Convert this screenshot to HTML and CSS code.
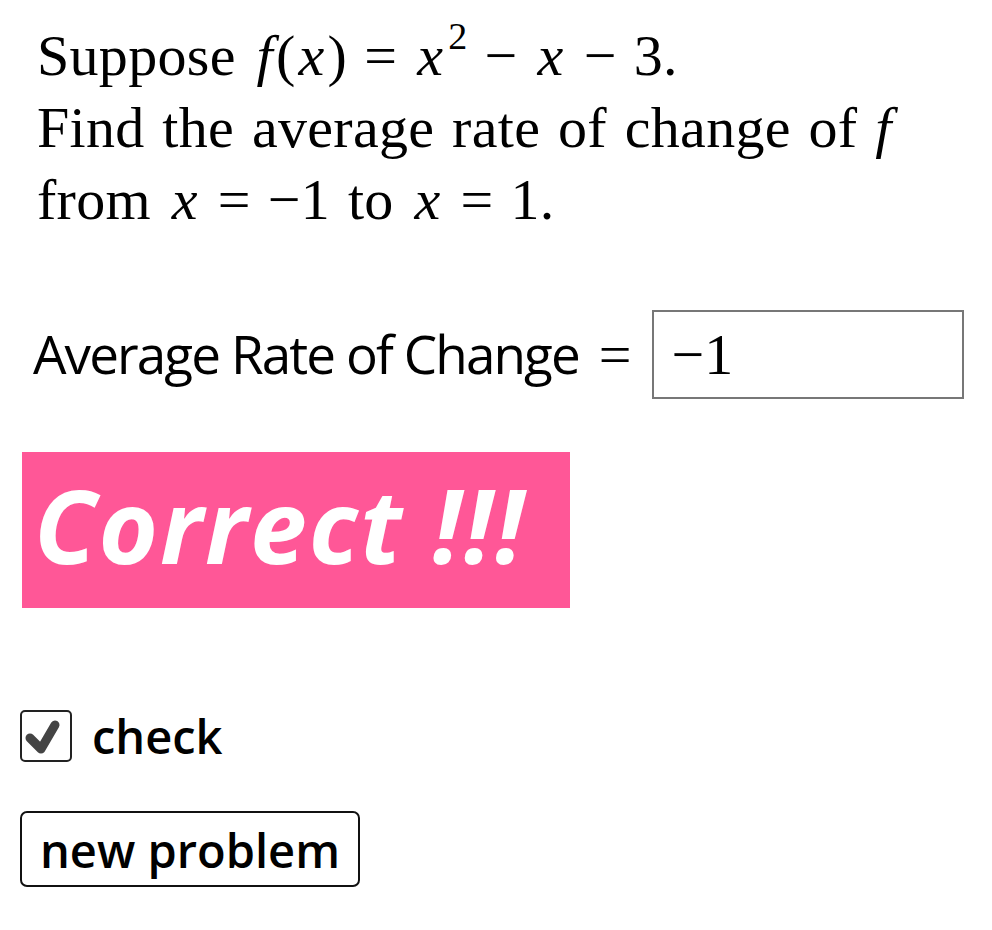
FILE: index.html
```html
<!DOCTYPE html>
<html lang="en">
  <head>
    <meta charset="UTF-8" />
    <meta name="viewport" content="width=device-width, initial-scale=1.0" />
    <title>Average Rate of Change</title>
    <link rel="stylesheet" href="styles.css">
  </head>
  <body>
    <div class="applet">
      <div class="question">
        <div class="line">Suppose <span class="math"><i>f</i>(<i>x</i>)<span class="op">=</span><i>x</i><sup>2</sup><span class="op">&minus;</span><i>x</i><span class="op">&minus;</span>3.</span></div>
        <div class="line">Find the average rate of change of <i>f</i></div>
        <div class="line">from <span class="math"><i>x</i><span class="op">=</span>&minus;1</span> to <span class="math"><i>x</i><span class="op">=</span>1.</span></div>
      </div>

      <div class="answer-row">
        <label for="answer" class="answer-label">Average Rate of Change</label>
        <span class="eq">=</span>
        <div class="answer-box" id="answer">&minus;1</div>
      </div>

      <div class="result">Correct !!!</div>

      <label class="check-row">
        <span class="checkbox">
          <svg viewBox="0 0 48 48" width="48" height="48">
            <path d="M8 26 L19 37 L33 13" fill="none" stroke="#444" stroke-width="9" stroke-linecap="round" stroke-linejoin="round" />
          </svg>
        </span>
        <span class="check-text">check</span>
      </label>

      <button type="button" class="btn">new problem</button>
    </div>
  </body>
</html>
```

FILE: styles.css
```css
body {
  margin: 0;
  padding: 0;
  background-color: #fff;
  color: #000;
}

.applet {
  display: flex;
  flex-direction: column;
  align-items: flex-start;
  padding: 20px 0 0 20px;
}

.question {
  padding-left: 17px;
  font-family: "Liberation Serif", "DejaVu Serif", serif;
  font-size: 58px;
  line-height: 72px;
  word-spacing: 3px;
  letter-spacing: 0.3px;
}

.question i {
  font-style: italic;
}

.math i {
  padding: 0 3px;
}

.op {
  margin: 0 17px;
}

.question sup {
  font-size: 38px;
  line-height: 0;
  vertical-align: 26px;
  margin-left: 2px;
}

.answer-row {
  display: flex;
  align-items: baseline;
  margin-top: 74px;
}

.answer-label {
  font-family: "Open Sans", "Noto Sans", sans-serif;
  font-size: 53px;
  letter-spacing: -1.9px;
  padding-left: 13px;
}

.eq {
  font-family: "Liberation Serif", serif;
  font-size: 58px;
  padding: 0 20px 0 20px;
}

.answer-box {
  width: 312px;
  height: 89px;
  box-sizing: border-box;
  border: 2px solid #777;
  padding: 0 0 0 18px;
  font-family: "Liberation Serif", "DejaVu Serif", serif;
  font-size: 58px;
  line-height: 86px;
}

.result {
  width: 548px;
  height: 156px;
  box-sizing: border-box;
  margin: 53px 0 0 2px;
  padding: 8px 0 0 12px;
  background-color: #ff5797;
  color: #fff;
  font-family: "Open Sans", "Noto Sans", sans-serif;
  font-weight: bold;
  font-style: italic;
  font-size: 102px;
  letter-spacing: 2px;
  line-height: 130px;
}

.check-row {
  display: flex;
  align-items: center;
  gap: 20px;
  margin-top: 96px;
  font-family: "Open Sans", "Noto Sans", sans-serif;
  font-size: 47px;
  font-weight: 600;
}

.checkbox {
  width: 52px;
  height: 52px;
  box-sizing: border-box;
  border: 2px solid #222;
  border-radius: 5px;
  display: flex;
  align-items: center;
  justify-content: center;
}

.checkbox svg {
  display: block;
}

.btn {
  margin-top: 43px;
  width: 340px;
  height: 76px;
  padding: 2px 0 0;
  border: 2px solid #111;
  border-radius: 7px;
  background-color: #fff;
  color: #000;
  font-family: "Open Sans", "Noto Sans", sans-serif;
  font-size: 47px;
  font-weight: 600;
  cursor: pointer;
}
```
